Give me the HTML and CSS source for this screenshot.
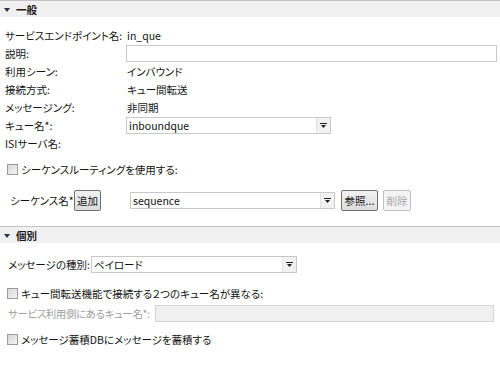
FILE: index.html
```html
<!DOCTYPE html>
<html lang="ja">
<head>
<meta charset="utf-8">
<link rel="stylesheet" href="styles.css">
</head>
<body>
<div class="sec-head"><span class="tri"></span>一般</div>
<div class="general">
  <div class="row"><div class="lbl">サービスエンドポイント名:</div><div class="val">in_que</div></div>
  <div class="row"><div class="lbl">説明:</div><div class="input grow"></div></div>
  <div class="row"><div class="lbl">利用シーン:</div><div class="val">インバウンド</div></div>
  <div class="row"><div class="lbl">接続方式:</div><div class="val">キュー間転送</div></div>
  <div class="row"><div class="lbl">メッセージング:</div><div class="val">非同期</div></div>
  <div class="row"><div class="lbl">キュー名*:</div><div class="select sel-queue"><span class="sel-text">inboundque</span><span class="arrow"><svg width="7" height="5" viewBox="0 0 7 5"><path d="M0 0h7v1H0z M1 2h5l-2.5 3z" fill="#222"/></svg></span></div></div>
  <div class="row"><div class="lbl">ISIサーバ名:</div></div>
</div>
<div class="check-row first-check"><span class="cb"></span><span>シーケンスルーティングを使用する:</span></div>
<div class="seq-row">
  <span class="seq-lbl">シーケンス名*</span>
  <span class="btn btn-add">追加</span>
  <div class="select sel-seq"><span class="sel-text">sequence</span><span class="arrow"><svg width="7" height="5" viewBox="0 0 7 5"><path d="M0 0h7v1H0z M1 2h5l-2.5 3z" fill="#222"/></svg></span></div>
  <span class="btn btn-ref">参照...</span>
  <span class="btn btn-del">削除</span>
</div>
<div class="sec-head sec2"><span class="tri"></span>個別</div>
<div class="indiv">
  <div class="row2"><span class="lbl2">メッセージの種別:</span><div class="select sel-kind"><span class="sel-text">ペイロード</span><span class="arrow"><svg width="7" height="5" viewBox="0 0 7 5"><path d="M0 0h7v1H0z M1 2h5l-2.5 3z" fill="#222"/></svg></span></div></div>
  <div class="check-row c2"><span class="cb"></span><span>キュー間転送機能で接続する２つのキュー名が異なる:</span></div>
  <div class="row2 dis-row"><span class="lbl2 disabled">サービス利用側にあるキュー名*:</span><div class="input disabled-input grow"></div></div>
  <div class="check-row c3"><span class="cb"></span><span>メッセージ蓄積DBにメッセージを蓄積する</span></div>
</div>
</body>
</html>
```

FILE: styles.css
```css
html, body {
  margin: 0;
  padding: 0;
  background: #fff;
}
body {
  font-family: "Noto Sans CJK JP", "Noto Sans", sans-serif;
  font-feature-settings: "palt";
  font-size: 10.5px;
  color: #141414;
  width: 500px;
  height: 372px;
  overflow: hidden;
  white-space: nowrap;
}
.sec-head {
  height: 16px;
  border-top: 1px solid #c4c4c4;
  background: #f0f0f0;
  display: flex;
  align-items: center;
  padding-left: 4px;
  font-weight: bold;
  color: #1a1a1a;
}
.tri {
  width: 0;
  height: 0;
  border-left: 3px solid transparent;
  border-right: 3px solid transparent;
  border-top: 4px solid #233449;
  margin-right: 6px;
  margin-top: 1px;
}
.general {
  padding: 9px 3px 0 5px;
  display: flex;
  flex-direction: column;
}
.row {
  height: 18px;
  display: flex;
  align-items: center;
}
.lbl {
  width: 121px;
  flex: none;
}
.val {
  padding-left: 1px;
}
.grow { flex: 1; }
.input {
  height: 15px;
  border: 1px solid #c9c9c9;
  background: #fff;
}
.select {
  height: 15px;
  border: 1px solid #c9c9c9;
  background: #fff;
  display: flex;
  align-items: stretch;
}
.sel-text {
  flex: 1;
  padding-left: 2px;
  display: flex;
  align-items: center;
  color: #111;
}
.arrow {
  width: 13px;
  background: #f2f2f2;
  border-left: 1px solid #e2e2e2;
  display: flex;
  align-items: center;
  justify-content: center;
}
.sel-queue { width: 203px; }
.check-row {
  display: flex;
  align-items: center;
  height: 14px;
}
.first-check {
  margin: 10px 0 0 7px;
}
.cb {
  width: 9px;
  height: 9px;
  border: 1px solid #9a9a9a;
  background: linear-gradient(135deg, #d8d8d8, #f4f4f4);
  margin-right: 3px;
  flex: none;
}
.seq-row {
  display: flex;
  align-items: center;
  height: 22px;
  margin: 13px 0 0 10px;
}
.seq-lbl { width: 64px; }
.btn {
  border: 1px solid #707070;
  border-radius: 2px;
  background: linear-gradient(#f2f2f2, #dcdcdc);
  display: flex;
  align-items: center;
  justify-content: center;
  box-sizing: border-box;
  height: 21px;
}
.btn-add { width: 27px; }
.sel-seq { width: 203px; margin-left: 29px; }
.btn-ref { width: 37px; margin-left: 6px; }
.btn-del {
  width: 28px;
  margin-left: 5px;
  border-color: #c0c0c0;
  background: #f4f4f4;
  color: #a8a8a8;
}
.sec2 {
  margin-top: 15px;
}
.indiv {
  padding: 12px 6px 0 8px;
}
.row2 {
  display: flex;
  align-items: center;
  height: 18px;
}
.lbl2 { width: 83px; flex: none; }
.sel-kind { width: 204px; }
.c2 { margin: 13px 0 0 -1px; }
.dis-row { margin-top: 4px; }
.disabled { color: #a0a0a0; width: 147px; letter-spacing: -0.4px; }
.disabled-input {
  background: #f0f0f0;
  border-color: #d4d4d4;
}
.c3 { margin: 10px 0 0 -1px; }
```
